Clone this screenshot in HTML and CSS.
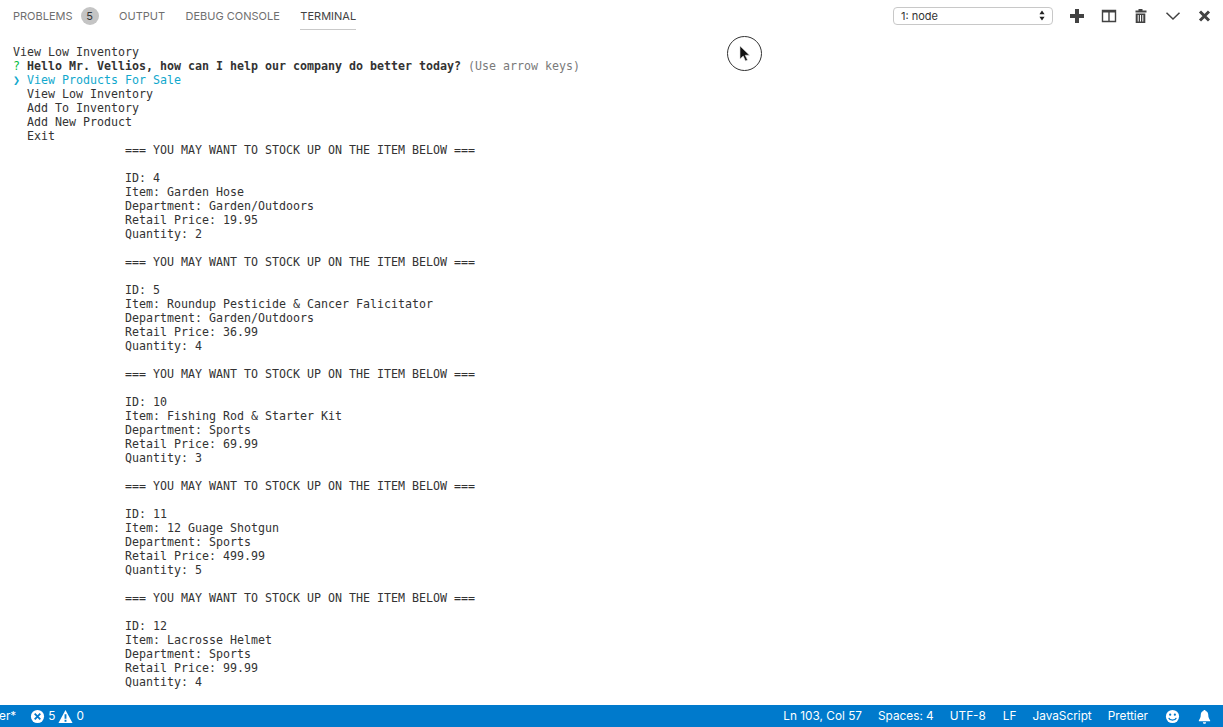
FILE: index.html
```html
<!DOCTYPE html>
<html lang="en">
<head>
<meta charset="utf-8">
<title>Terminal</title>
<link rel="stylesheet" href="styles.css">
</head>
<body>
<div class="app">
  <header class="panel-bar">
    <nav class="tabs">
      <span class="tab">PROBLEMS<span class="badge">5</span></span>
      <span class="tab">OUTPUT</span>
      <span class="tab">DEBUG CONSOLE</span>
      <span class="tab active">TERMINAL</span>
    </nav>
    <div class="actions">
      <div class="select"><span>1: node</span>
        <svg class="updown" width="6" height="11" viewBox="0 0 6 11"><path d="M3 0.5 L5.6 4.2 H0.4 Z M3 10.5 L0.4 6.8 H5.6 Z" fill="#222"/></svg>
      </div>
      <svg class="icon" width="16" height="16" viewBox="0 0 16 16"><path d="M6 1h4v5h5v4h-5v5H6v-5H1V6h5z" fill="#424242"/></svg>
      <svg class="icon" width="16" height="16" viewBox="0 0 16 16"><path d="M1.5 2.5h13v11h-13z M8 3v10" fill="none" stroke="#424242" stroke-width="1.4"/><path d="M1.5 2.5h13v2h-13z" fill="#424242"/></svg>
      <svg class="icon" width="16" height="16" viewBox="0 0 16 16"><path d="M5.500 1h4v1.500h4v2h-11v-2h3z M2.700 5.500h9.600V15H2.700z" fill="#424242"/><path d="M5.200 7v6.500M7.500 7v6.500M9.800 7v6.500" stroke="#fff" stroke-width="1"/></svg>
      <svg class="icon" width="16" height="16" viewBox="0 0 16 16"><path d="M1.500 4.800 L8 11 L14.500 4.800" fill="none" stroke="#424242" stroke-width="1.500"/></svg>
      <svg class="icon" width="16" height="16" viewBox="0 0 16 16"><path d="M3 3.500 L12 12.500 M12 3.500 L3 12.500" fill="none" stroke="#424242" stroke-width="3"/></svg>
    </div>
  </header>
  <main class="terminal">
<pre class="output">View Low Inventory
<span class="green">?</span> <b>Hello Mr. Vellios, how can I help our company do better today?</b> <span class="dim">(Use arrow keys)</span>
<span class="cyan"><b>❯</b> View Products For Sale</span>
  View Low Inventory
  Add To Inventory
  Add New Product
  Exit
                === YOU MAY WANT TO STOCK UP ON THE ITEM BELOW ===

                ID: 4
                Item: Garden Hose
                Department: Garden/Outdoors
                Retail Price: 19.95
                Quantity: 2

                === YOU MAY WANT TO STOCK UP ON THE ITEM BELOW ===

                ID: 5
                Item: Roundup Pesticide &amp; Cancer Falicitator
                Department: Garden/Outdoors
                Retail Price: 36.99
                Quantity: 4

                === YOU MAY WANT TO STOCK UP ON THE ITEM BELOW ===

                ID: 10
                Item: Fishing Rod &amp; Starter Kit
                Department: Sports
                Retail Price: 69.99
                Quantity: 3

                === YOU MAY WANT TO STOCK UP ON THE ITEM BELOW ===

                ID: 11
                Item: 12 Guage Shotgun
                Department: Sports
                Retail Price: 499.99
                Quantity: 5

                === YOU MAY WANT TO STOCK UP ON THE ITEM BELOW ===

                ID: 12
                Item: Lacrosse Helmet
                Department: Sports
                Retail Price: 99.99
                Quantity: 4</pre>
  </main>
  <footer class="status">
    <div class="status-left">
      <span class="clip">er*</span>
      <span class="problems">
        <svg width="15" height="15" viewBox="0 0 16 16"><circle cx="8" cy="8" r="7" fill="#fff"/><path d="M5 5l6 6M11 5l-6 6" stroke="#007acc" stroke-width="2"/></svg>
        <span>5</span>
        <svg width="15" height="15" viewBox="0 0 16 16"><path d="M8 1l7.500 14H.5z" fill="#fff"/><path d="M8 5.500v5M8 11.500v2" stroke="#007acc" stroke-width="2"/></svg>
        <span>0</span>
      </span>
    </div>
    <div class="status-right">
      <span>Ln 103, Col 57</span>
      <span>Spaces: 4</span>
      <span class="utf">UTF-8</span>
      <span>LF</span>
      <span>JavaScript</span>
      <span>Prettier</span>
      <svg class="status-icon" width="15" height="15" viewBox="0 0 16 16"><circle cx="8" cy="8" r="7" fill="#fff"/><circle cx="5.500" cy="6" r="1.200" fill="#007acc"/><circle cx="10.500" cy="6" r="1.200" fill="#007acc"/><path d="M4 9.500c1 3 7 3 8 0" fill="none" stroke="#007acc" stroke-width="1.300"/></svg>
      <svg class="status-icon" width="15" height="15" viewBox="0 0 16 16"><path d="M8 1c-.8 0-1.200.5-1.200 1.100C4.800 2.700 4 4.300 4 6.500c0 3-1 4-2 5.500v1h12v-1c-1-1.500-2-2.500-2-5.500 0-2.200-.8-3.800-2.800-4.400C9.200 1.500 8.800 1 8 1z M6.300 14h3.400c0 1-.8 1.700-1.700 1.700s-1.700-.7-1.700-1.700z" fill="#fff"/></svg>
    </div>
  </footer>
  <div class="cursor-ring">
    <svg width="12" height="17" viewBox="0 0 12 17"><path d="M1 1v13l3.200-3 2.300 5 2-1-2.300-4.800H10.500z" fill="#111" stroke="#ddd" stroke-width=".6"/></svg>
  </div>
</div>
</body>
</html>
```
FILE: styles.css
```css
* { box-sizing: border-box; }
html, body { margin: 0; height: 100%; background: #fff; overflow: hidden; }
.app {
  position: relative;
  display: flex;
  flex-direction: column;
  height: 727px;
  font-family: Inter, "Noto Sans", sans-serif;
  color: #424242;
}
.panel-bar {
  flex: none;
  height: 45px;
  display: flex;
  justify-content: space-between;
  align-items: flex-start;
  padding: 0 10px 0 13px;
}
.tabs { display: flex; gap: 20.5px; height: 30px; align-items: stretch; font-size: 11px; }
.tab {
  display: flex;
  align-items: center;
  color: #6f6f6f;
  padding-top: 2px;
}
.tab.active { color: #424242; border-bottom: 1px solid #c9c9c9; }
.badge {
  width: 18px;
  height: 18px;
  margin-left: 8px;
  margin-top: -1px;
  border-radius: 50%;
  background: #c4c4c4;
  color: #333;
  font-size: 11px;
  display: flex;
  align-items: center;
  justify-content: center;
}
.actions { display: flex; align-items: center; gap: 16px; height: 30px; padding-top: 1px; }
.select {
  width: 160px;
  height: 18px;
  padding: 0 7px;
  display: flex;
  align-items: center;
  justify-content: space-between;
  border: 1px solid #c8c8c8;
  border-radius: 4px;
  background: #fff;
  font-size: 11px;
  color: #333;
}
.icon { display: block; }
.terminal { flex: 1; min-height: 0; overflow: hidden; padding-left: 13px; }
.output {
  margin: 0;
  font-family: "DejaVu Sans Mono", monospace;
  font-size: 11.63px;
  line-height: 14px;
  color: #333;
}
.green { color: #00bc3c; }
.cyan { color: #11a8cd; }
.dim { color: #7a7a7a; }
.status {
  flex: none;
  height: 22px;
  background: #007acc;
  color: #fff;
  font-size: 11.8px;
  display: flex;
  justify-content: space-between;
  align-items: center;
  padding-right: 11px;
}
.status-left { display: flex; align-items: center; gap: 14px; }
.clip { margin-left: -1px; }
.problems { display: flex; align-items: center; gap: 3px; }
.status-right { display: flex; align-items: center; gap: 16px; }
.status-icon { margin-left: 1px; }
.utf { margin-right: 1px; }
.cursor-ring {
  position: absolute;
  left: 727px;
  top: 36px;
  width: 35px;
  height: 35px;
  border: 1px solid #333;
  border-radius: 50%;
  display: flex;
  align-items: center;
  justify-content: center;
}
```
